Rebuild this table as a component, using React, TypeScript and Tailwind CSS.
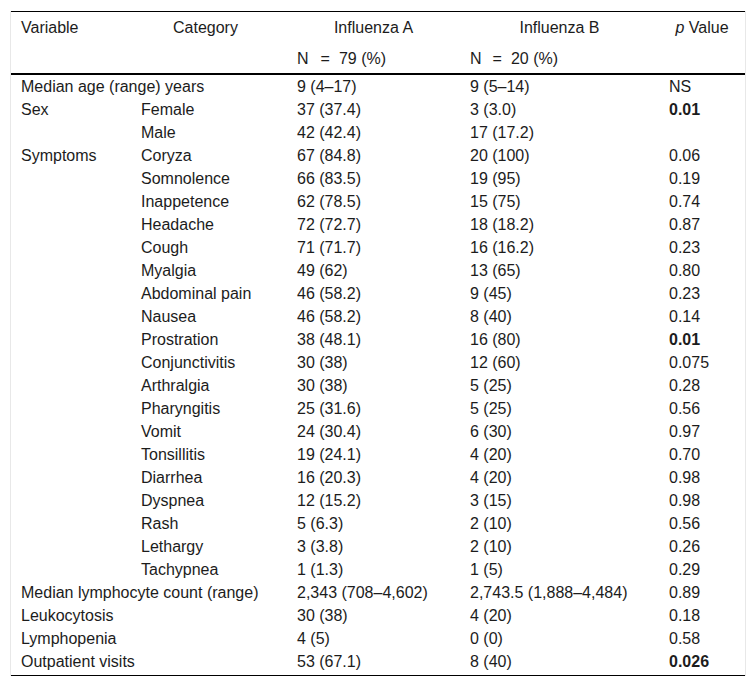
type Row = {
  variable: string
  category?: string
  span?: boolean
  a: string
  b: string
  p: string
  bold?: boolean
}

const rows: Row[] = [
  { variable: 'Median age (range) years', span: true, a: '9 (4–17)', b: '9 (5–14)', p: 'NS' },
  { variable: 'Sex', category: 'Female', a: '37 (37.4)', b: '3 (3.0)', p: '0.01', bold: true },
  { variable: '', category: 'Male', a: '42 (42.4)', b: '17 (17.2)', p: '' },
  { variable: 'Symptoms', category: 'Coryza', a: '67 (84.8)', b: '20 (100)', p: '0.06' },
  { variable: '', category: 'Somnolence', a: '66 (83.5)', b: '19 (95)', p: '0.19' },
  { variable: '', category: 'Inappetence', a: '62 (78.5)', b: '15 (75)', p: '0.74' },
  { variable: '', category: 'Headache', a: '72 (72.7)', b: '18 (18.2)', p: '0.87' },
  { variable: '', category: 'Cough', a: '71 (71.7)', b: '16 (16.2)', p: '0.23' },
  { variable: '', category: 'Myalgia', a: '49 (62)', b: '13 (65)', p: '0.80' },
  { variable: '', category: 'Abdominal pain', a: '46 (58.2)', b: '9 (45)', p: '0.23' },
  { variable: '', category: 'Nausea', a: '46 (58.2)', b: '8 (40)', p: '0.14' },
  { variable: '', category: 'Prostration', a: '38 (48.1)', b: '16 (80)', p: '0.01', bold: true },
  { variable: '', category: 'Conjunctivitis', a: '30 (38)', b: '12 (60)', p: '0.075' },
  { variable: '', category: 'Arthralgia', a: '30 (38)', b: '5 (25)', p: '0.28' },
  { variable: '', category: 'Pharyngitis', a: '25 (31.6)', b: '5 (25)', p: '0.56' },
  { variable: '', category: 'Vomit', a: '24 (30.4)', b: '6 (30)', p: '0.97' },
  { variable: '', category: 'Tonsillitis', a: '19 (24.1)', b: '4 (20)', p: '0.70' },
  { variable: '', category: 'Diarrhea', a: '16 (20.3)', b: '4 (20)', p: '0.98' },
  { variable: '', category: 'Dyspnea', a: '12 (15.2)', b: '3 (15)', p: '0.98' },
  { variable: '', category: 'Rash', a: '5 (6.3)', b: '2 (10)', p: '0.56' },
  { variable: '', category: 'Lethargy', a: '3 (3.8)', b: '2 (10)', p: '0.26' },
  { variable: '', category: 'Tachypnea', a: '1 (1.3)', b: '1 (5)', p: '0.29' },
  { variable: 'Median lymphocyte count (range)', span: true, a: '2,343 (708–4,602)', b: '2,743.5 (1,888–4,484)', p: '0.89' },
  { variable: 'Leukocytosis', span: true, a: '30 (38)', b: '4 (20)', p: '0.18' },
  { variable: 'Lymphopenia', span: true, a: '4 (5)', b: '0 (0)', p: '0.58' },
  { variable: 'Outpatient visits', span: true, a: '53 (67.1)', b: '8 (40)', p: '0.026', bold: true },
]

export default function App() {
  return (
    <div className="min-h-screen bg-white pt-[11px] pl-[10px] font-['Liberation_Sans',Arial,sans-serif] text-[16px] leading-[22px] text-[#1c1c1c]">
      <div className="w-[736px] border-x border-[#e8e8e8]">
        <table className="w-full table-fixed border-collapse">
          <colgroup>
            <col className="w-[120px]" />
            <col className="w-[156px]" />
            <col className="w-[173px]" />
            <col className="w-[199px]" />
            <col className="w-[86px]" />
          </colgroup>
          <thead>
            <tr className="border-t border-black">
              <th className="h-[31px] pt-[1px] pl-[10px] text-left font-normal">Variable</th>
              <th className="h-[31px] pt-[1px] pl-[42px] text-left font-normal">Category</th>
              <th className="h-[31px] pt-[1px] text-center font-normal">Influenza A</th>
              <th className="h-[31px] pt-[1px] text-center font-normal">Influenza B</th>
              <th className="h-[31px] pt-[1px] text-center font-normal">
                <i>p</i> Value
              </th>
            </tr>
            <tr className="border-b-2 border-black">
              <th className="h-[31px]" />
              <th className="h-[31px]" />
              <th className="h-[31px] pt-[2px] pl-[10px] text-left font-normal whitespace-nowrap">
                N<span className="ml-[12px]">=</span>
                <span className="ml-[9px]">79 (%)</span>
              </th>
              <th className="h-[31px] pt-[2px] pl-[10px] text-left font-normal whitespace-nowrap">
                N<span className="ml-[11px]">=</span>
                <span className="ml-[9px]">20 (%)</span>
              </th>
              <th className="h-[31px]" />
            </tr>
          </thead>
          <tbody className="border-b border-black">
            {rows.map((r, i) => {
              const last = i === rows.length - 1
              const cell = `p-0 pt-[1px] pl-[10px] text-left align-top whitespace-nowrap ${last ? 'h-[26px]' : 'h-[23px]'}`
              return (
                <tr key={i}>
                  {r.span ? (
                    <td colSpan={2} className={cell}>
                      {r.variable}
                    </td>
                  ) : (
                    <>
                      <td className={cell}>{r.variable}</td>
                      <td className={cell}>{r.category}</td>
                    </>
                  )}
                  <td className={cell}>{r.a}</td>
                  <td className={cell}>{r.b}</td>
                  <td className={`${cell} ${r.bold ? 'font-bold' : ''}`}>{r.p}</td>
                </tr>
              )
            })}
          </tbody>
        </table>
      </div>
    </div>
  )
}
